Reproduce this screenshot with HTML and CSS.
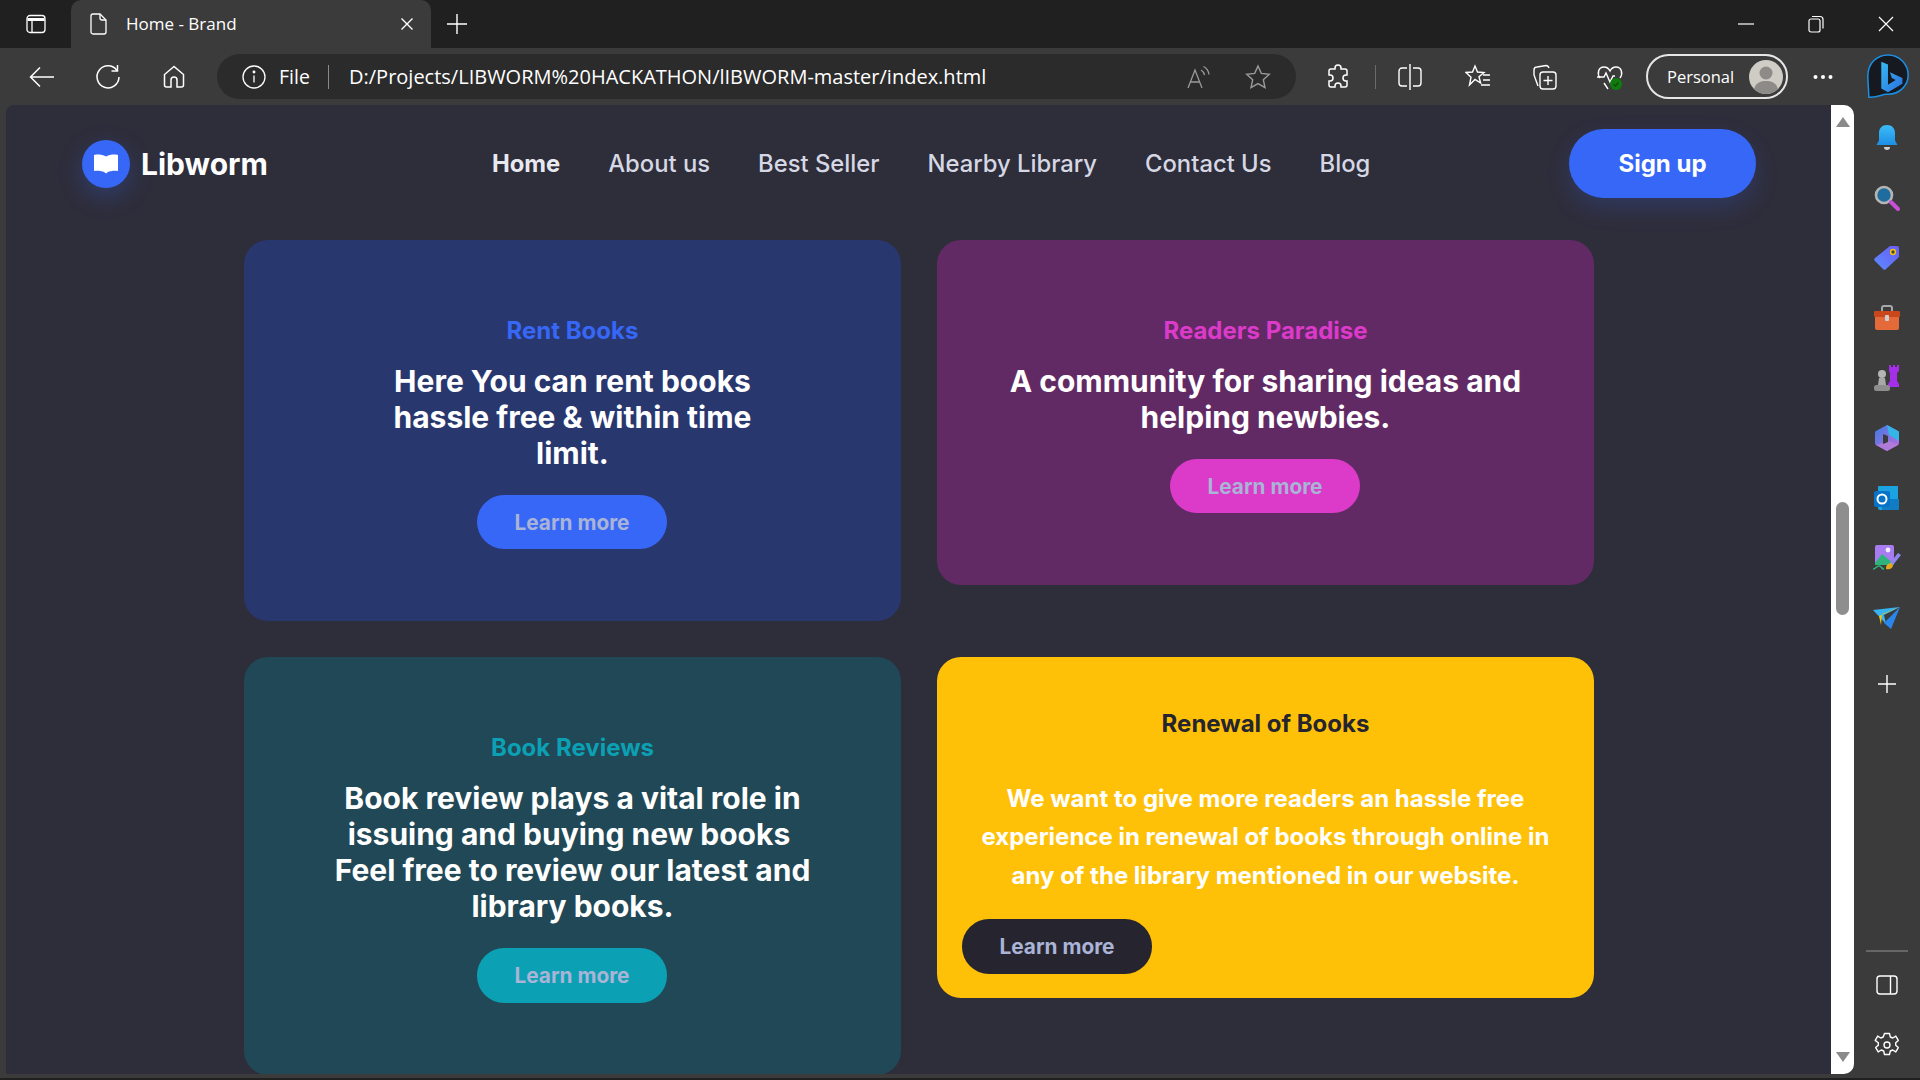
FILE: index.html
```html
<!DOCTYPE html>
<html lang="en">
<head>
<meta charset="utf-8">
<title>Home - Brand</title>
<link rel="stylesheet" href="styles.css">
</head>
<body>
<div class="app">
  <div class="tabstrip">
    <div class="ws-btn">
      <svg width="20" height="20" viewBox="0 0 20 20" fill="none" stroke="#fff" stroke-width="1.3"><rect x="1" y="1.5" width="18" height="17" rx="3"/><path d="M1.5 5.5h17" stroke-width="3"/><path d="M6 7v11"/></svg>
    </div>
    <div class="tab">
      <svg class="tab-doc" width="18" height="22" viewBox="0 0 18 22" fill="none" stroke="#fff" stroke-width="1.3"><path d="M3 1h7l6 6v12a2 2 0 0 1-2 2H3a2 2 0 0 1-2-2V3a2 2 0 0 1 2-2z"/><path d="M10 1v4a2 2 0 0 0 2 2h4"/></svg>
      <span class="tab-title">Home - Brand</span>
      <svg class="tab-x" width="14" height="14" viewBox="0 0 14 14" stroke="#fff" stroke-width="1.4"><path d="M1.5 1.5l11 11M12.5 1.5l-11 11"/></svg>
    </div>
    <div class="newtab">
      <svg width="22" height="22" viewBox="0 0 22 22" stroke="#fff" stroke-width="1.4"><path d="M11 1v20M1 11h20"/></svg>
    </div>
    <div class="winctl">
      <div class="winbtn"><svg width="16" height="16" viewBox="0 0 16 16" stroke="#fff" stroke-width="1.2"><path d="M0 8h16"/></svg></div>
      <div class="winbtn"><svg width="16" height="18" viewBox="0 0 16 18" fill="none" stroke="#fff" stroke-width="1.2"><rect x="1" y="4" width="11" height="13" rx="2"/><path d="M4 1.5h8a3 3 0 0 1 3 3v9"/></svg></div>
      <div class="winbtn"><svg width="16" height="16" viewBox="0 0 16 16" stroke="#fff" stroke-width="1.2"><path d="M1 1l14 14M15 1L1 15"/></svg></div>
    </div>
  </div>

  <div class="toolbar">
    <div class="tb-cell"><svg width="26" height="22" viewBox="0 0 26 22" fill="none" stroke="#fff" stroke-width="1.5"><path d="M25 11H2M11 1.5L1.5 11l9.5 9.5"/></svg></div>
    <div class="tb-cell"><svg width="26" height="26" viewBox="0 0 26 26" fill="none" stroke="#fff" stroke-width="1.5"><path d="M22 6.5A11 11 0 1 0 24 13"/><path d="M22.5 1v6h-6"/></svg></div>
    <div class="tb-cell"><svg width="24" height="24" viewBox="0 0 24 24" fill="none" stroke="#fff" stroke-width="1.5"><path d="M12 1.5L2.500 9.5V20a2 2 0 0 0 2 2h4.500v-7a3 3 0 0 1 6 0v7h4.500a2 2 0 0 0 2-2V9.5z"/></svg></div>
    <div class="address">
      <svg class="addr-info" width="24" height="24" viewBox="0 0 24 24" fill="none" stroke="#fff" stroke-width="1.3"><circle cx="12" cy="12" r="11"/><path d="M12 10.5v7"/><circle cx="12" cy="7" r=".8" fill="#fff"/></svg>
      <span class="addr-file">File</span>
      <span class="addr-sep"></span>
      <span class="addr-url">D:/Projects/LIBWORM%20HACKATHON/lIBWORM-master/index.html</span>
      <svg class="addr-read" width="24" height="24" viewBox="0 0 24 24" fill="none" stroke="#9a9a9a" stroke-width="1.3"><path d="M1 23L8 5l7 18M3.5 17h9"/><path d="M14 5c2 1 3 3 3.5 5M16.500 1.500c3 1.500 5 4.500 5.500 8"/></svg>
      <svg class="addr-star" width="26" height="26" viewBox="0 0 26 26" fill="none" stroke="#9a9a9a" stroke-width="1.4"><path d="M13 2l3.300 7.400 8 .9-6 5.400 1.700 7.900-7-4-7 4 1.700-7.900-6-5.400 8-.9z"/></svg>
    </div>
    <div class="tb-right">
      <div class="tb-cell"><svg width="24" height="26" viewBox="0 0 24 26" fill="none" stroke="#fff" stroke-width="1.5"><path d="M9 4a3 3 0 0 1 6 0v1h4a2 2 0 0 1 2 2v4h-1a3 3 0 0 0 0 6h1v4a2 2 0 0 1-2 2h-4v-1a3 3 0 0 0-6 0v1H5a2 2 0 0 1-2-2v-4h1a3 3 0 0 0 0-6H3V7a2 2 0 0 1 2-2h4z"/></svg></div>
      <span class="tb-sep"></span>
      <div class="tb-cell wide"><svg width="24" height="26" viewBox="0 0 24 26" fill="none" stroke="#fff" stroke-width="1.4"><path d="M9 4H4a3 3 0 0 0-3 3v12a3 3 0 0 0 3 3h5M15 4h5a3 3 0 0 1 3 3v12a3 3 0 0 1-3 3h-5M12 0v26"/></svg></div>
      <div class="tb-cell"><svg width="26" height="26" viewBox="0 0 26 26" fill="none" stroke="#fff" stroke-width="1.4"><path d="M10 2l2.500 6 6.500.5-5 4.200 1.600 6.300L10 15.500 4.500 21l1.500-7.800L1 8.500 7.500 8z"/><path d="M18 11h7M18 16h7M16 21h9"/></svg></div>
      <div class="tb-cell"><svg width="26" height="26" viewBox="0 0 26 26" fill="none" stroke="#fff" stroke-width="1.4"><path d="M7 22L3 11V6a3 3 0 0 1 3-3l9-1.500c1.500 0 2.500 1 3 2.500"/><rect x="9" y="8" width="16" height="17" rx="3"/><path d="M17 12v9M12.500 16.500h9"/></svg></div>
      <div class="tb-cell"><svg width="28" height="28" viewBox="0 0 28 28" fill="none" stroke="#fff" stroke-width="1.4"><path d="M4 15C1 11 2 4 8 4c3 0 5 2 6 4 1-2 3-4 6-4 6 0 7 7 4 11"/><path d="M1 14h7l2-4 4 9 3-6h2M8 20l4 6"/><circle cx="20" cy="21" r="6" fill="#107c10" stroke="none"/><path d="M17.500 21l2 2 3-3.500" stroke-width="1.2" stroke="#0c4a0c"/></svg></div>
      <div class="profile">
        <span class="profile-name">Personal</span>
        <svg class="avatar" width="34" height="34" viewBox="0 0 34 34"><circle cx="17" cy="17" r="17" fill="#cfccc6"/><circle cx="17" cy="13" r="6.5" fill="#8d8b87"/><path d="M5 29c2-7 7-8 12-8s10 1 12 8a17 17 0 0 1-24 0z" fill="#8d8b87"/></svg>
      </div>
      <div class="tb-cell dots"><svg width="20" height="4" viewBox="0 0 20 4" fill="#fff"><circle cx="2.5" cy="2" r="2"/><circle cx="10" cy="2" r="2"/><circle cx="17.5" cy="2" r="2"/></svg></div>
      <div class="bing">
        <svg width="46" height="48" viewBox="0 0 46 50" fill="none"><defs><linearGradient id="bingfill" x1="0" y1="0" x2="1" y2="1"><stop offset="0" stop-color="#37b9f1"/><stop offset="1" stop-color="#2a6fe0"/></linearGradient></defs><path d="M23 2C11 2 2 11 2 24c0 8 1 15 1 22 7 1 12-2 17-3h3c12 0 21-9 21-20S35 2 23 2z" fill="#16191f" stroke="#1a8fe3" stroke-width="1.6"/><path d="M16 9l7 3v21l8-5-4-2-2-6 13 6v6l-15 9-7-4z" fill="url(#bingfill)"/></svg>
      </div>
    </div>
  </div>

  <div class="main">
    <div class="page">
      <header class="site-header">
        <a class="brand">
          <span class="brand-mark">
            <svg width="26" height="21" viewBox="0 0 26 21" fill="#fff"><path d="M1 2c4-1 8-.5 12 1.500 4-2 8-2.500 12-1.500v16c-4-.5-8 0-10.500 1.300L13 20.500l-1.500-1.200C9 18 5 17.500 1 18z"/></svg>
          </span>
          <span class="brand-name">Libworm</span>
        </a>
        <nav class="site-nav">
          <a class="nav-link active">Home</a>
          <a class="nav-link">About us</a>
          <a class="nav-link">Best Seller</a>
          <a class="nav-link">Nearby Library</a>
          <a class="nav-link">Contact Us</a>
          <a class="nav-link">Blog</a>
        </nav>
        <a class="signup">Sign up</a>
      </header>
      <section class="cards">
        <article class="card card-blue">
          <h3 class="card-label">Rent Books</h3>
          <h2 class="card-head">Here You can rent books<br>hassle free &amp; within time<br>limit.</h2>
          <a class="learn">Learn more</a>
        </article>
        <article class="card card-purple">
          <h3 class="card-label">Readers Paradise</h3>
          <h2 class="card-head">A community for sharing ideas and<br>helping newbies.</h2>
          <a class="learn">Learn more</a>
        </article>
        <article class="card card-teal">
          <h3 class="card-label">Book Reviews</h3>
          <h2 class="card-head">Book review plays a vital role in<br>issuing and buying new books&nbsp;<br>Feel free to review our latest and<br>library books.</h2>
          <a class="learn">Learn more</a>
        </article>
        <article class="card card-yellow">
          <h3 class="card-label">Renewal of Books</h3>
          <p class="card-text">We want to give more readers an hassle free<br>experience in renewal of books through online in<br>any of the library mentioned in our website.</p>
          <a class="learn">Learn more</a>
        </article>
      </section>
    </div>
    <div class="scrollbar">
      <span class="sb-arrow up"></span>
      <span class="sb-thumb"></span>
      <span class="sb-arrow down"></span>
    </div>
    <aside class="sidebar">
      <div class="side-icons">
        <div class="side-cell"><svg width="28" height="28" viewBox="0 0 28 28"><defs><linearGradient id="bell" x1="0" y1="0" x2="0" y2="1"><stop offset="0" stop-color="#3dbbf7"/><stop offset="1" stop-color="#1c8fe6"/></linearGradient></defs><path d="M14 1c5 0 8 3.500 8 8v7c0 2 2 3 2.500 5h-21C4 19 6 18 6 16V9c0-4.500 3-8 8-8z" fill="url(#bell)"/><path d="M11 23h6a3 3 0 0 1-6 0z" fill="#cfcfcf"/></svg></div>
        <div class="side-cell"><svg width="28" height="28" viewBox="0 0 28 28"><circle cx="11" cy="11" r="8" fill="#1f6d9e" stroke="#b5b5b5" stroke-width="2.6"/><path d="M18 18l7 7" stroke="#c94fd8" stroke-width="4" stroke-linecap="round"/></svg></div>
        <div class="side-cell"><svg width="26" height="26" viewBox="0 0 26 26"><defs><linearGradient id="tag" x1="0" y1="1" x2="1" y2="0"><stop offset="0" stop-color="#5b8cff"/><stop offset="1" stop-color="#6a5cf5"/></linearGradient></defs><path d="M16 1h7a2 2 0 0 1 2 2v9L12 24a2 2 0 0 1-3 0L1 16a2 2 0 0 1 0-3z" fill="url(#tag)"/><circle cx="19" cy="7" r="2.4" fill="#444" stroke="#f5c400" stroke-width="1.5"/></svg></div>
        <div class="side-cell"><svg width="28" height="26" viewBox="0 0 28 26"><path d="M9 6V3a2 2 0 0 1 2-2h6a2 2 0 0 1 2 2v3" fill="none" stroke="#a8a8a8" stroke-width="2"/><rect x="1" y="6" width="26" height="6" rx="1" fill="#c9471a"/><path d="M2 12h24v11a2 2 0 0 1-2 2H4a2 2 0 0 1-2-2z" fill="#e56a3a"/><rect x="12" y="10" width="4" height="6" rx="1" fill="#cfcfcf"/></svg></div>
        <div class="side-cell"><svg width="28" height="28" viewBox="0 0 28 28"><path d="M16 1h2v2h2V1h2v2h2V1h2v6l-2 2v8l2 3v3H15v-3l2-3V9l-1-2z" fill="#a52fe8"/><circle cx="9" cy="10" r="4" fill="#b5b5b5"/><path d="M6 14h6l1 7H5z" fill="#a8a8a8"/><rect x="1" y="21" width="16" height="6" rx="2.5" fill="#8e8e8e"/></svg></div>
        <div class="side-cell"><svg width="26" height="28" viewBox="0 0 26 28"><defs><linearGradient id="cp" x1="0" y1="0" x2="1" y2="1"><stop offset="0" stop-color="#3b7de0"/><stop offset="1" stop-color="#c26be0"/></linearGradient></defs><path d="M13 1L24 7a2 2 0 0 1 1 2v10a2 2 0 0 1-1 2L13 27 2 21a2 2 0 0 1-1-2V9a2 2 0 0 1 1-2z" fill="url(#cp)"/><path d="M13 1l11 6a2 2 0 0 1 1 2v8L15 11z" fill="#33b5e8"/><path d="M2 21l11 6 11-6-9-4-6 2z" fill="#b07ad9"/><path d="M9 10l5 2v6l-5 2z" fill="#3b3b3b"/></svg></div>
        <div class="side-cell"><svg width="26" height="26" viewBox="0 0 26 26"><path d="M4 2a1 1 0 0 1 1-1h19v24H6a2 2 0 0 1-2-2z" fill="#1aa3e0"/><path d="M8 14h17v10a1 1 0 0 1-1 1H8z" fill="#0f7cc4"/><rect x="0" y="6" width="16" height="16" rx="2" fill="#0672c8"/><circle cx="8" cy="14" r="4.5" fill="none" stroke="#fff" stroke-width="2"/></svg></div>
        <div class="side-cell"><svg width="30" height="28" viewBox="0 0 30 28"><rect x="3" y="1" width="19" height="20" rx="2" fill="#a87cf0"/><circle cx="16" cy="6" r="2.4" fill="#f2eaff"/><path d="M3 19l7-9 12 10v1H3z" fill="#2fb37c"/><path d="M1 25c3 0 3-3 6-3s2 3 5 3" fill="none" stroke="#2fb37c" stroke-width="1.6"/><path d="M18 19L26 9l3 2-8 10z" fill="#8f86ee"/><path d="M14 23c1-3 3-4 5-4l2 2c0 3-3 5-7 4z" fill="#e3a91e"/></svg></div>
        <div class="side-cell"><svg width="28" height="24" viewBox="0 0 28 24"><path d="M0 4L27 1 11 9l2 9z" fill="#37b3f0"/><path d="M27 1l-9 22-7-6z" fill="#2a86ec"/><path d="M6 10L27 1 9 8l-1 11z" fill="#f2c015"/></svg></div>
        <div class="side-cell side-add"><svg width="20" height="20" viewBox="0 0 20 20" stroke="#fff" stroke-width="1.4"><path d="M10 1v18M1 10h18"/></svg></div>
      </div>
      <div class="side-foot">
        <span class="side-rule"></span>
        <div class="side-cell"><svg width="22" height="20" viewBox="0 0 22 20" fill="none" stroke="#fff" stroke-width="1.4"><rect x="1" y="1" width="20" height="18" rx="3"/><path d="M14.5 1v18"/></svg></div>
        <div class="side-cell"><svg width="26" height="26" viewBox="0 0 26 26" fill="none" stroke="#fff" stroke-width="1.4"><circle cx="13" cy="13" r="3"/><path d="M10.500 1.500h5l.8 3.500 2.400 1 3.100-1.900 2.500 4.300-2.600 2.400v2.400l2.600 2.400-2.500 4.300-3.100-1.900-2.400 1-.8 3.500h-5l-.8-3.500-2.400-1-3.100 1.900-2.500-4.300 2.600-2.400v-2.400L1.200 8.400l2.500-4.300 3.100 1.900 2.400-1z" stroke-linejoin="round"/></svg></div>
      </div>
    </aside>
  </div>
  <div class="bottom-strip"></div>
</div>
</body>
</html>
```

FILE: styles.css
```css
* { box-sizing: border-box; margin: 0; padding: 0; }
html, body { width: 1920px; height: 1080px; overflow: hidden; }
body { font-family: "Inter", "Noto Sans", sans-serif; background: #3b3b3b; }
a { text-decoration: none; }
svg { display: block; flex: none; }

.app { display: flex; flex-direction: column; width: 1920px; height: 1080px; }

/* browser chrome */
.tabstrip { display: flex; align-items: stretch; height: 48px; background: #202020; flex: none; color: #fff; font-family: "Open Sans", "Noto Sans", sans-serif; }
.ws-btn { width: 71px; display: flex; align-items: center; justify-content: center; }
.tab { width: 360px; background: #3b3b3b; border-radius: 10px 10px 0 0; display: flex; align-items: center; padding-left: 19px; }
.tab-title { margin: 0 0 2px 18px; font-size: 17px; width: 274px; white-space: nowrap; }
.newtab { width: 52px; display: flex; align-items: center; justify-content: center; }
.winctl { margin-left: auto; margin-right: -1px; display: flex; }
.winbtn { width: 70px; display: flex; align-items: center; justify-content: center; }

.toolbar { display: flex; align-items: center; height: 57px; flex: none; background: #3b3b3b; padding: 0 0 0 9px; color: #fff; font-family: "Open Sans", "Noto Sans", sans-serif; }
.tb-cell { width: 66px; height: 45px; display: flex; align-items: center; justify-content: center; flex: none; }
.tb-cell.wide { width: 70px; }
.address { display: flex; align-items: center; width: 1079px; height: 45px; margin-left: 10px; background: #2b2b2b; border-radius: 23px; padding-left: 25px; }
.addr-file { margin-left: 13px; font-size: 19.5px; width: 49px; }
.addr-sep { width: 1px; height: 24px; background: #8a8a8a; }
.addr-url { margin-left: 20px; font-size: 20px; width: 838px; white-space: nowrap; }
.addr-star { margin-left: 34px; }
.tb-right { display: flex; align-items: center; margin-left: 9px; }
.tb-sep { width: 1px; height: 24px; background: #6a6a6a; margin: 0 -1px 0 4px; }
.profile { display: flex; align-items: center; width: 142px; height: 45px; margin-left: 3px; border: 2px solid #e6e6e6; border-radius: 23px; padding-left: 19px; }
.profile-name { font-size: 16.5px; width: 82px; white-space: nowrap; }
.dots { width: 70px; }
.bing { width: 46px; margin-left: 7px; }

/* main */
.main { display: flex; flex: 1; min-height: 0; }
.page { width: 1825px; margin: 0 0 4px 6px; background: #2e2d3a; border-radius: 8px 0 0 0; overflow: hidden; }
.site-header { display: flex; align-items: center; height: 117px; padding: 0 75px 0 76px; }
.brand { display: flex; align-items: center; gap: 11px; }
.brand-mark { width: 48px; height: 48px; border-radius: 50%; background: #3767f6; display: flex; align-items: center; justify-content: center; box-shadow: 0 8px 24px rgba(55, 103, 246, .28); }
.brand-name { color: #fff; font-size: 30px; font-weight: 700; }
.site-nav { display: flex; gap: 48px; margin: 0 0 1px 224px; }
.nav-link { color: #d5d8e4; font-size: 23.8px; font-weight: 500; }
.nav-link.active { color: #e8e9f0; font-weight: 700; }
.signup { margin-left: auto; width: 187px; height: 69px; border-radius: 35px; background: #3767f6; color: #fff; font-size: 24px; font-weight: 700; display: flex; align-items: center; justify-content: center; box-shadow: 0 10px 24px rgba(55, 103, 246, .2); }

.cards { display: grid; grid-template-columns: 657px 657px; column-gap: 36px; row-gap: 36px; align-items: start; padding: 18px 0 0 238px; }
.card { border-radius: 24px; padding: 72px 24px; display: flex; flex-direction: column; align-items: center; text-align: center; }
.card-label { font-size: 24px; font-weight: 700; line-height: 38px; margin-bottom: 13px; }
.card-head { color: #fff; font-size: 30px; font-weight: 700; line-height: 36px; }
.learn { width: 190px; height: 54px; margin: 24px 1px 0 0; border-radius: 27px; display: flex; align-items: center; justify-content: center; font-size: 20.8px; font-weight: 700; color: #a9b4d6; }
.card-blue { background: #29376f; }
.card-blue .card-label { color: #3767f6; }
.card-blue .learn { background: #3767f6; }
.card-purple { background: #622a65; }
.card-purple .card-label { color: #dc3ac9; }
.card-purple .learn { background: #dc3ac9; }
.card-teal { background: #214856; }
.card-teal .card-label { color: #0ba0b4; }
.card-teal .learn { background: #0ba0b4; height: 55px; }
.card-yellow { background: #ffc107; padding: 48px 24px 24px; }
.card-yellow .card-label { color: #26252f; margin-bottom: 37px; }
.card-text { color: #fff; font-size: 24px; font-weight: 700; line-height: 38.4px; }
.card-yellow .learn { align-self: flex-start; background: #26252f; height: 55px; margin: 24px 0 0 1px; }

/* scrollbar */
.scrollbar { width: 23px; margin-bottom: 4px; background: #fff; border-radius: 0 10px 10px 0; display: flex; flex-direction: column; align-items: center; position: relative; }
.sb-arrow { width: 0; height: 0; border-left: 7px solid transparent; border-right: 7px solid transparent; }
.sb-arrow.up { border-bottom: 10px solid #8a8a8a; margin-top: 12px; }
.sb-arrow.down { border-top: 10px solid #8a8a8a; margin-top: auto; margin-bottom: 12px; }
.sb-thumb { position: absolute; top: 397px; width: 13px; height: 113px; border-radius: 7px; background: #8e8e8e; }

/* sidebar */
.sidebar { flex: 1; display: flex; flex-direction: column; align-items: center; padding-top: 3px; }
.side-icons { display: flex; flex-direction: column; }
.side-cell { width: 60px; height: 60px; display: flex; align-items: center; justify-content: center; }
.side-add { margin-top: 6px; }
.side-foot { margin-top: auto; display: flex; flex-direction: column; align-items: center; padding-bottom: 3px; }
.side-rule { width: 42px; height: 2px; background: #666; margin-bottom: 3px; }
.bottom-strip { height: 2px; background: #202020; flex: none; }
```
